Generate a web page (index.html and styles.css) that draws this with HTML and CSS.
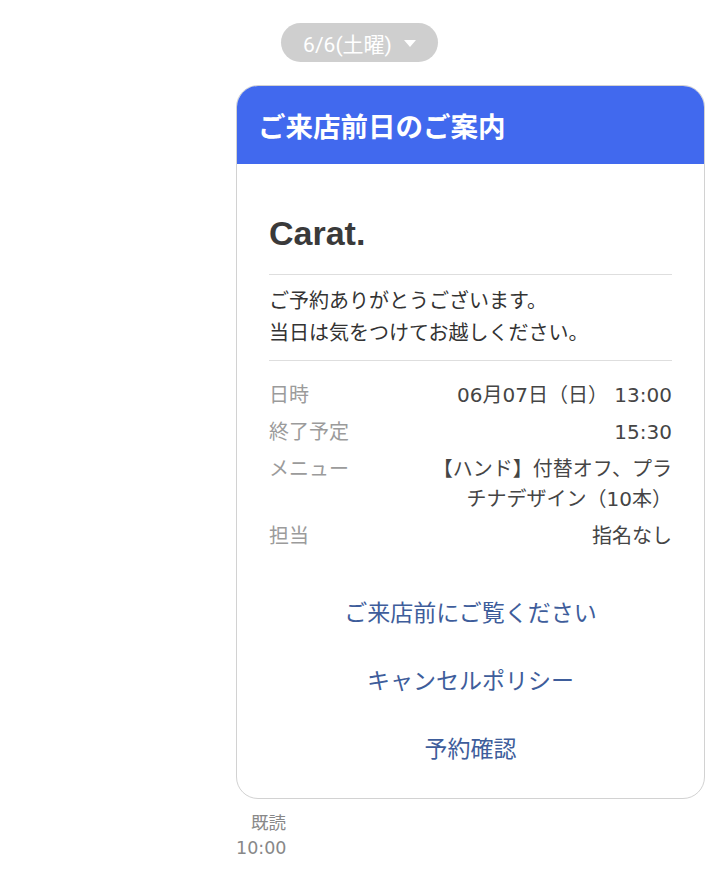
FILE: index.html
```html
<!DOCTYPE html>
<html lang="ja">
<head>
<meta charset="utf-8">
<title>ご来店前日のご案内</title>
<link rel="stylesheet" href="styles.css">
</head>
<body>
<div class="chat">
  <div class="date-pill"><span>6/6(土曜)</span><svg class="caret" width="12" height="7" viewBox="0 0 12 7"><path d="M0 0 L12 0 L6 7 Z" fill="#fff"/></svg></div>
  <div class="card">
    <div class="card-head">ご来店前日のご案内</div>
    <div class="card-body">
      <div class="logo">Carat.</div>
      <div class="divider"></div>
      <p class="message">ご予約ありがとうございます。<br>当日は気をつけてお越しください。</p>
      <div class="divider"></div>
      <div class="rows">
        <div class="row"><span class="label">日時</span><span class="value">06月07日（日） 13:00</span></div>
        <div class="row"><span class="label">終了予定</span><span class="value">15:30</span></div>
        <div class="row"><span class="label">メニュー</span><span class="value narrow">【ハンド】付替オフ、プラチナデザイン（10本）</span></div>
        <div class="row"><span class="label">担当</span><span class="value">指名なし</span></div>
      </div>
      <div class="links">
        <div class="link">ご来店前にご覧ください</div>
        <div class="link">キャンセルポリシー</div>
        <div class="link">予約確認</div>
      </div>
    </div>
  </div>
  <div class="receipt">既読<br>10:00</div>
</div>
</body>
</html>
```
FILE: styles.css
```css
html, body {
  margin: 0;
  padding: 0;
  background: #ffffff;
}
body {
  font-family: "DejaVu Sans", "Noto Sans CJK JP", sans-serif;
  color: #444;
}
.chat {
  padding-top: 23px;
}
.date-pill {
  margin-left: 281px;
  width: 157px;
  height: 39px;
  box-sizing: border-box;
  border-radius: 20px;
  background: #cfcfcf;
  color: #fff;
  font-family: "Roboto", "Noto Sans CJK JP", sans-serif;
  font-size: 21px;
  display: flex;
  align-items: center;
  justify-content: center;
  gap: 12px;
}
.caret {
  margin-top: 1px;
}
.card {
  margin-top: 23px;
  margin-left: 236px;
  width: 469px;
  box-sizing: border-box;
  border: 1.5px solid #d2d2d2;
  border-radius: 22px;
  overflow: hidden;
  background: #fff;
}
.card-head {
  background: #4169ee;
  color: #fff;
  height: 78px;
  display: flex;
  align-items: center;
  padding-left: 21px;
  font-size: 27.5px;
  font-weight: bold;
  font-family: "Noto Sans CJK JP", sans-serif;
}
.card-body {
  padding: 0 32px 15px;
}
.logo {
  font-family: "Liberation Sans", sans-serif;
  font-weight: bold;
  font-size: 34px;
  color: #3a3a3a;
  line-height: 42px;
  padding: 48px 0 20px;
}
.divider {
  height: 1px;
  background: #dedede;
}
.message {
  margin: 0;
  padding: 10px 0 11px;
  font-size: 20px;
  line-height: 32px;
  color: #333;
}
.rows {
  padding-top: 19px;
  display: flex;
  flex-direction: column;
  gap: 7px;
}
.row {
  display: flex;
  justify-content: space-between;
  align-items: flex-start;
  font-size: 20px;
  line-height: 30px;
}
.label {
  color: #9b9b9b;
}
.value {
  color: #454545;
  text-align: right;
}
.value.narrow {
  max-width: 250px;
}
.links {
  padding-top: 28px;
}
.link {
  height: 68px;
  line-height: 68px;
  text-align: center;
  color: #3e5d9b;
  font-size: 23px;
}
.receipt {
  margin-top: 12px;
  margin-left: 236px;
  width: 50px;
  text-align: right;
  font-size: 17.5px;
  line-height: 25px;
  color: #888;
}
```
